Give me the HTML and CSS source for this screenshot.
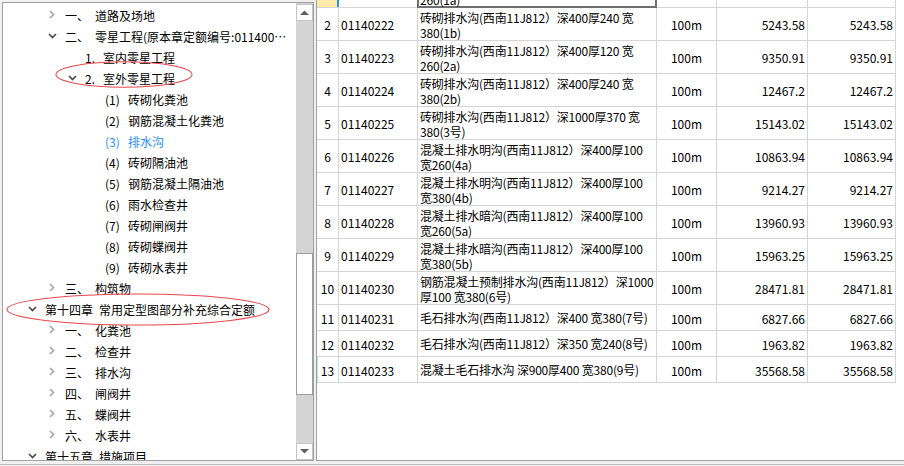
FILE: index.html
```html
<!DOCTYPE html>
<html lang="zh-CN">
<head>
    <meta charset="UTF-8">
    <title>定额库</title>
    <link rel="stylesheet" href="styles.css">
</head>
<body>

    <div class="window">
        <!-- Chapter tree -->
        <div class="tree-pane">
            <div class="tree">
                <div class="node l1"><span class="chev"><svg class="ico-r" width="6" height="9"><path d="M1 1l3.5 3.5L1 8" /></svg></span><span class="n w30">一、</span>道路及场地</div>
                <div class="node l1"><span class="chev"><svg class="ico-d" width="9" height="6"><path d="M1 1l3.5 3.5L8 1" /></svg></span><span class="n w30">二、</span>零星工程(原本章定额编号:01140001～01140233)</div>
                <div class="node l2"><span class="chev"></span><span class="n w18">1.</span>室内零星工程</div>
                <div class="node l2"><span class="chev"><svg class="ico-d" width="9" height="6"><path d="M1 1l3.5 3.5L8 1" /></svg></span><span class="n w18">2.</span>室外零星工程</div>
                <div class="node l3"><span class="chev"></span><span class="n w23">(1)</span>砖砌化粪池</div>
                <div class="node l3"><span class="chev"></span><span class="n w23">(2)</span>钢筋混凝土化粪池</div>
                <div class="node l3 sel"><span class="chev"></span><span class="n w23">(3)</span>排水沟</div>
                <div class="node l3"><span class="chev"></span><span class="n w23">(4)</span>砖砌隔油池</div>
                <div class="node l3"><span class="chev"></span><span class="n w23">(5)</span>钢筋混凝土隔油池</div>
                <div class="node l3"><span class="chev"></span><span class="n w23">(6)</span>雨水检查井</div>
                <div class="node l3"><span class="chev"></span><span class="n w23">(7)</span>砖砌闸阀井</div>
                <div class="node l3"><span class="chev"></span><span class="n w23">(8)</span>砖砌蝶阀井</div>
                <div class="node l3"><span class="chev"></span><span class="n w23">(9)</span>砖砌水表井</div>
                <div class="node l1"><span class="chev"><svg class="ico-r" width="6" height="9"><path d="M1 1l3.5 3.5L1 8" /></svg></span><span class="n w30">三、</span>构筑物</div>
                <div class="node l0"><span class="chev"><svg class="ico-d" width="9" height="6"><path d="M1 1l3.5 3.5L8 1" /></svg></span><span class="n w54">第十四章</span>常用定型图部分补充综合定额</div>
                <div class="node l1"><span class="chev"><svg class="ico-r" width="6" height="9"><path d="M1 1l3.5 3.5L1 8" /></svg></span><span class="n w30">一、</span>化粪池</div>
                <div class="node l1"><span class="chev"><svg class="ico-r" width="6" height="9"><path d="M1 1l3.5 3.5L1 8" /></svg></span><span class="n w30">二、</span>检查井</div>
                <div class="node l1"><span class="chev"><svg class="ico-r" width="6" height="9"><path d="M1 1l3.5 3.5L1 8" /></svg></span><span class="n w30">三、</span>排水沟</div>
                <div class="node l1"><span class="chev"><svg class="ico-r" width="6" height="9"><path d="M1 1l3.5 3.5L1 8" /></svg></span><span class="n w30">四、</span>闸阀井</div>
                <div class="node l1"><span class="chev"><svg class="ico-r" width="6" height="9"><path d="M1 1l3.5 3.5L1 8" /></svg></span><span class="n w30">五、</span>蝶阀井</div>
                <div class="node l1"><span class="chev"><svg class="ico-r" width="6" height="9"><path d="M1 1l3.5 3.5L1 8" /></svg></span><span class="n w30">六、</span>水表井</div>
                <div class="node l0"><span class="chev"><svg class="ico-d" width="9" height="6"><path d="M1 1l3.5 3.5L8 1" /></svg></span><span class="n w54">第十五章</span>措施项目</div>
            </div>

            <!-- Vertical scrollbar -->
            <div class="vscroll">
                <div class="sb-btn"><svg width="9" height="5"><path d="M0 5L4.5 0.5 9 5z" /></svg></div>
                <div class="sb-track">
                    <div class="sb-thumb"></div>
                </div>
                <div class="sb-btn"><svg width="9" height="5"><path d="M0 0L4.5 4.5 9 0z" /></svg></div>
            </div>
        </div>

        <div class="splitter"></div>

        <!-- Quota list -->
        <div class="grid-pane">
            <div class="grid">
                <div class="row two">
                    <div class="c num cur">1</div>
                    <div class="c code">01140221</div>
                    <div class="c name focus">砖砌排水沟(西南11J812）深400厚240 宽<br>260(1a)</div>
                    <div class="c unit">100m</div>
                    <div class="c amt">3944.31</div>
                    <div class="c amt">3944.31</div>
                </div>
                <div class="row two">
                    <div class="c num">2</div>
                    <div class="c code">01140222</div>
                    <div class="c name">砖砌排水沟(西南11J812）深400厚240 宽<br>380(1b)</div>
                    <div class="c unit">100m</div>
                    <div class="c amt">5243.58</div>
                    <div class="c amt">5243.58</div>
                </div>
                <div class="row two">
                    <div class="c num">3</div>
                    <div class="c code">01140223</div>
                    <div class="c name">砖砌排水沟(西南11J812）深400厚120 宽<br>260(2a)</div>
                    <div class="c unit">100m</div>
                    <div class="c amt">9350.91</div>
                    <div class="c amt">9350.91</div>
                </div>
                <div class="row two">
                    <div class="c num">4</div>
                    <div class="c code">01140224</div>
                    <div class="c name">砖砌排水沟(西南11J812）深400厚240 宽<br>380(2b)</div>
                    <div class="c unit">100m</div>
                    <div class="c amt">12467.2</div>
                    <div class="c amt">12467.2</div>
                </div>
                <div class="row two">
                    <div class="c num">5</div>
                    <div class="c code">01140225</div>
                    <div class="c name">砖砌排水沟(西南11J812）深1000厚370 宽<br>380(3号)</div>
                    <div class="c unit">100m</div>
                    <div class="c amt">15143.02</div>
                    <div class="c amt">15143.02</div>
                </div>
                <div class="row two">
                    <div class="c num">6</div>
                    <div class="c code">01140226</div>
                    <div class="c name">混凝土排水明沟(西南11J812）深400厚100<br>宽260(4a)</div>
                    <div class="c unit">100m</div>
                    <div class="c amt">10863.94</div>
                    <div class="c amt">10863.94</div>
                </div>
                <div class="row two">
                    <div class="c num">7</div>
                    <div class="c code">01140227</div>
                    <div class="c name">混凝土排水明沟(西南11J812）深400厚100<br>宽380(4b)</div>
                    <div class="c unit">100m</div>
                    <div class="c amt">9214.27</div>
                    <div class="c amt">9214.27</div>
                </div>
                <div class="row two">
                    <div class="c num">8</div>
                    <div class="c code">01140228</div>
                    <div class="c name">混凝土排水暗沟(西南11J812）深400厚100<br>宽260(5a)</div>
                    <div class="c unit">100m</div>
                    <div class="c amt">13960.93</div>
                    <div class="c amt">13960.93</div>
                </div>
                <div class="row two">
                    <div class="c num">9</div>
                    <div class="c code">01140229</div>
                    <div class="c name">混凝土排水暗沟(西南11J812）深400厚100<br>宽380(5b)</div>
                    <div class="c unit">100m</div>
                    <div class="c amt">15963.25</div>
                    <div class="c amt">15963.25</div>
                </div>
                <div class="row two">
                    <div class="c num">10</div>
                    <div class="c code">01140230</div>
                    <div class="c name">钢筋混凝土预制排水沟(西南11J812）深1000<br>厚100 宽380(6号)</div>
                    <div class="c unit">100m</div>
                    <div class="c amt">28471.81</div>
                    <div class="c amt">28471.81</div>
                </div>
                <div class="row one">
                    <div class="c num">11</div>
                    <div class="c code">01140231</div>
                    <div class="c name">毛石排水沟(西南11J812）深400 宽380(7号)</div>
                    <div class="c unit">100m</div>
                    <div class="c amt">6827.66</div>
                    <div class="c amt">6827.66</div>
                </div>
                <div class="row one">
                    <div class="c num">12</div>
                    <div class="c code">01140232</div>
                    <div class="c name">毛石排水沟(西南11J812）深350 宽240(8号)</div>
                    <div class="c unit">100m</div>
                    <div class="c amt">1963.82</div>
                    <div class="c amt">1963.82</div>
                </div>
                <div class="row one">
                    <div class="c num last">13</div>
                    <div class="c code">01140233</div>
                    <div class="c name">混凝土毛石排水沟 深900厚400 宽380(9号)</div>
                    <div class="c unit">100m</div>
                    <div class="c amt">35568.58</div>
                    <div class="c amt">35568.58</div>
                </div>
            </div>
        </div>
    </div>

    <div class="statusbar"></div>

    <!-- Hand-drawn marks over the tree -->
    <svg class="marks" width="904" height="466">
        <ellipse cx="124" cy="74.5" rx="68" ry="12.8" />
        <ellipse cx="138" cy="309.5" rx="131" ry="15.5" />
    </svg>

</body>
</html>
```

FILE: styles.css
```css
/* General */
* {
    box-sizing: border-box;
}

body {
    margin: 0;
    width: 904px;
    height: 466px;
    overflow: hidden;
    position: relative;
    background-color: #f0f0f0;
    font-family: "Noto Sans CJK SC", "Noto Sans", sans-serif;
    font-size: 12px;
    color: #000;
}

.window {
    display: flex;
    height: 461px;
}

/* Tree pane */
.tree-pane {
    margin: 2px 0 0 2px;
    width: 312px;
    height: 459px;
    border: 1px solid #a0a0a0;
    background-color: #fff;
    display: flex;
}

.tree {
    width: 293px;
    padding-top: 2px;
    overflow: hidden;
}

.node {
    height: 21px;
    line-height: 21px;
    white-space: nowrap;
    overflow: hidden;
    text-overflow: ellipsis;
    padding-right: 8px;
}

.l0 { padding-left: 22px; }
.l1 { padding-left: 42px; }
.l2 { padding-left: 62px; }
.l3 { padding-left: 82px; }

.chev {
    display: inline-block;
    width: 14px;
    height: 21px;
    margin-right: 6px;
    vertical-align: top;
}

.chev svg {
    display: block;
    margin: 0 auto;
    fill: none;
    stroke-width: 1.7;
}

.ico-r {
    margin-top: 5px !important;
    stroke: #a8a8a8;
}

.ico-d {
    margin-top: 7px !important;
    stroke: #4a4a4a;
}

.n {
    display: inline-block;
}

.w18 { width: 18px; }
.w23 { width: 23px; }
.w30 { width: 30px; }
.w54 { width: 54px; }

.sel {
    color: #1e8fff;
}

/* Scrollbar */
.vscroll {
    width: 17px;
    padding-top: 1px;
    display: flex;
    flex-direction: column;
    background-color: #d4d4d4;
}

.sb-btn {
    height: 17px;
    background-color: #fff;
    border: 1px solid #c4c4c4;
    display: flex;
    align-items: center;
    justify-content: center;
}

.sb-btn svg {
    fill: #606060;
}

.sb-track {
    flex: 1;
    background-color: #d4d4d4;
}

.sb-thumb {
    margin-top: 232px;
    height: 142px;
    background-color: #fff;
    border: 1px solid #9c9c9c;
}

.splitter {
    width: 2px;
}

/* Grid pane */
.grid-pane {
    flex: 1;
    height: 461px;
    background-color: #fff;
    border-left: 1px solid #a0a0a0;
    border-bottom: 1px solid #a0a0a0;
    overflow: hidden;
}

.grid {
    display: grid;
    grid-template-columns: 21px 78px 238px 59px 90px 87px;
    gap: 1px;
    width: fit-content;
    margin-top: -25px;
    background-color: #d5d5d5;
    border-right: 1px solid #d5d5d5;
    border-bottom: 1px solid #d5d5d5;
}

.row {
    display: contents;
}

.c {
    background-color: #fff;
    display: flex;
    align-items: center;
    padding: 1px 2px 0;
    white-space: nowrap;
    overflow: hidden;
}

.two .c { height: 32px; }
.one .c { height: 25px; }

.c.num,
.c.unit {
    justify-content: center;
}

.c.amt {
    justify-content: flex-end;
}

.c.name {
    letter-spacing: -0.2px;
}

.two .c.name {
    display: block;
    padding: 2px 2px 0;
    line-height: 15px;
}

.one .c.name {
    line-height: 24px;
}

/* Current row / focused cell */
.c.cur {
    background-color: #fde9a8;
    box-shadow: 1px 0 0 #2396e0, inset -1px 0 0 #2396e0;
}

.c.focus {
    overflow: visible;
    box-shadow: 0 0 0 1px #6e6e6e, inset 0 0 0 1px #6e6e6e;
}

.c.last {
    box-shadow: 1px 0 0 #b4e0fa, inset 1px 0 0 #b4e0fa;
}

.statusbar {
    margin-top: 3px;
    border-top: 1px solid #bdbdbd;
}

/* Red marks */
.marks {
    position: absolute;
    top: 0;
    left: 0;
    pointer-events: none;
}

.marks ellipse {
    fill: none;
    stroke: #e8484c;
    stroke-width: 1.1;
}
```
